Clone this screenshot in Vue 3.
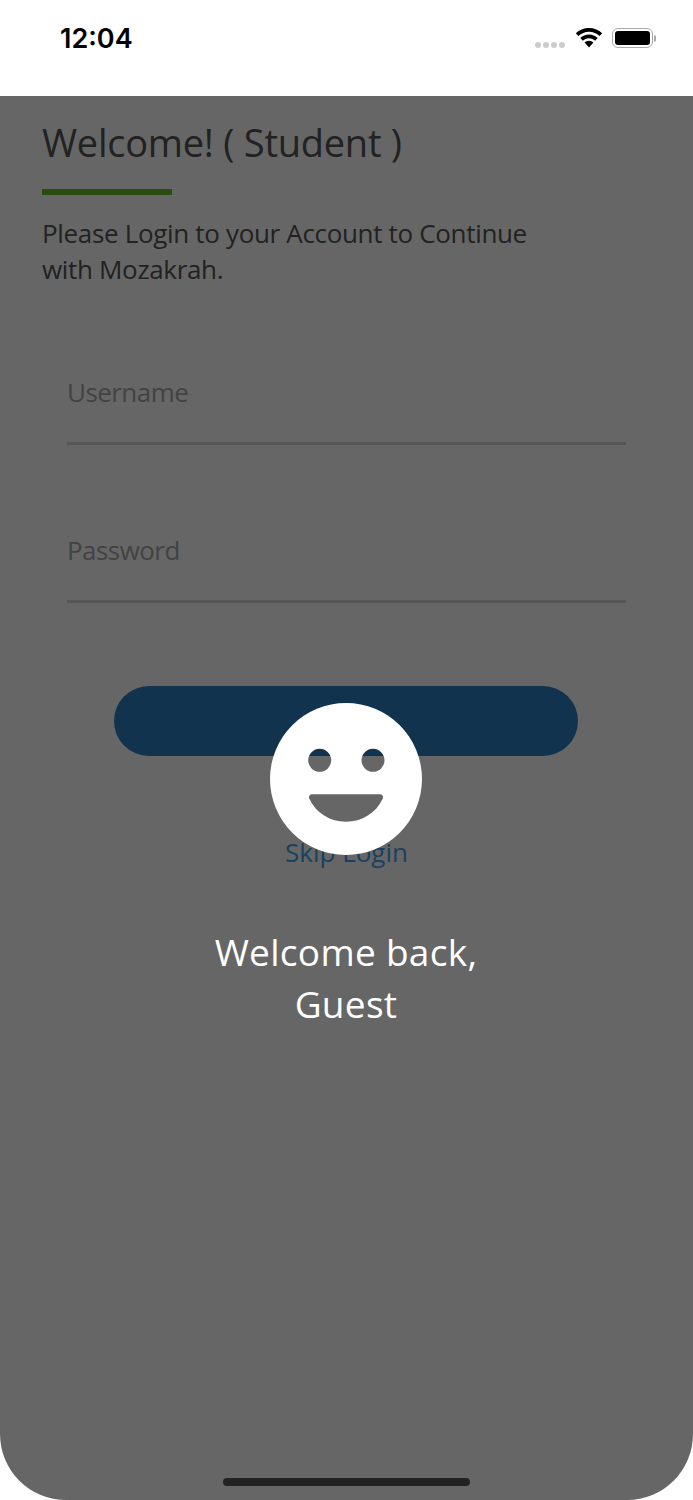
<template>
  <div class="phone">
    <header class="status-bar">
      <span class="time">12:04</span>
      <div class="status-icons">
        <div class="signal">
          <i v-for="n in 4" :key="n"></i>
        </div>
        <svg class="wifi" width="28" height="20" viewBox="0 0 28 20">
          <path d="M14 0C8.800 0 4.300 2 .8 5.300l2.600 2.800C6.200 5.400 9.900 3.800 14 3.800s7.800 1.600 10.600 4.300l2.600-2.800C23.700 2 19.200 0 14 0z" />
          <path d="M14 6.400c-3.400 0-6.400 1.300-8.700 3.500l2.600 2.800c1.600-1.500 3.700-2.500 6.100-2.500s4.500 1 6.100 2.500l2.600-2.800c-2.300-2.200-5.300-3.500-8.700-3.500z" />
          <path d="M14 12.800c-1.700 0-3.200.7-4.400 1.800L14 19.400l4.400-4.800c-1.200-1.100-2.700-1.800-4.400-1.800z" />
        </svg>
        <div class="battery">
          <div class="battery-level"></div>
        </div>
        <div class="battery-nub"></div>
      </div>
    </header>

    <main class="screen">
      <section class="login">
        <h1 class="title">Welcome! ( Student )</h1>
        <div class="title-bar"></div>
        <p class="intro">Please Login to your Account to Continue<br />with Mozakrah.</p>

        <div class="field">Username</div>
        <div class="field">Password</div>

        <button class="login-btn"></button>
        <a class="skip">Skip Login</a>
      </section>

      <div class="overlay">
        <svg class="smiley" width="152" height="152" viewBox="0 0 152 152">
          <path
            fill="#fff"
            fill-rule="evenodd"
            d="M76 0a76 76 0 1 0 0 152a76 76 0 1 0 0-152z
               M49.700 45.800a11.500 11.500 0 1 0 0 23a11.500 11.500 0 1 0 0-23z
               M103 45.800a11.500 11.500 0 1 0 0 23a11.500 11.500 0 1 0 0-23z
               M42 91.300H110a3 3 0 0 1 2.700 4.400C106 110 92 118.700 76 118.700S46 110 39.300 95.700A3 3 0 0 1 42 91.300z"
          />
        </svg>
        <p class="message">Welcome back,<br />Guest</p>
      </div>

      <div class="home-indicator"></div>
    </main>
  </div>
</template>

<script setup>
</script>

<style>
html, body {
  margin: 0;
  background: #fff;
}
</style>

<style scoped>
.phone {
  width: 693px;
  height: 1500px;
  display: flex;
  flex-direction: column;
  background: #fff;
  overflow: hidden;
  font-family: "Open Sans", "Noto Sans", sans-serif;
}

.status-bar {
  height: 96px;
  flex: none;
  box-sizing: border-box;
  padding: 23px 37px 0 60px;
  display: flex;
  justify-content: space-between;
  align-items: flex-start;
}

.time {
  font-family: Inter, sans-serif;
  font-size: 27px;
  font-weight: 600;
  line-height: 32px;
  color: #000;
}

.status-icons {
  display: flex;
  align-items: flex-start;
  padding-top: 5px;
}

.signal {
  display: flex;
  gap: 2px;
  margin: 14px 10px 0 0;
}

.signal i {
  width: 6px;
  height: 6px;
  border-radius: 50%;
  background: #ccc;
}

.wifi {
  fill: #000;
  margin-right: 9px;
}

.battery {
  width: 41px;
  height: 20px;
  box-sizing: border-box;
  padding: 2px;
  border: 1.5px solid #aaa;
  border-radius: 6px;
}

.battery-level {
  height: 100%;
  background: #000;
  border-radius: 3px;
}

.battery-nub {
  width: 2px;
  height: 7px;
  margin: 7px 0 0 1px;
  background: #aaa;
  border-radius: 0 2px 2px 0;
}

.screen {
  position: relative;
  flex: 1;
  overflow: hidden;
  border-radius: 0 0 66px 66px;
  background: #fff;
}

.login {
  padding: 21px 67px 0 42px;
}

.title {
  margin: 0;
  font-size: 38px;
  font-weight: 400;
  line-height: 50px;
  letter-spacing: -0.25px;
  color: #555;
}

.title-bar {
  width: 130px;
  height: 6px;
  margin-top: 22px;
  background: #69be2a;
}

.intro {
  margin: 20px 0 0;
  font-size: 26px;
  line-height: 36px;
  letter-spacing: -0.33px;
  color: #555;
}

.field {
  margin-left: 25px;
  height: 70px;
  margin-top: 85px;
  border-bottom: 3px solid #d8d8d8;
  font-size: 26px;
  line-height: 40px;
  letter-spacing: -0.55px;
  color: #a8a8a8;
}

.login-btn {
  display: block;
  width: 464px;
  height: 70px;
  margin: 83px 0 0 72px;
  border: 0;
  border-radius: 35px;
  background: #2f7fc3;
}

.skip {
  display: block;
  margin-top: 76px;
  padding-left: 25px;
  text-align: center;
  font-size: 26px;
  line-height: 40px;
  color: #47a0f0;
}

.overlay {
  position: absolute;
  inset: 0;
  display: flex;
  flex-direction: column;
  align-items: center;
  padding: 607px 1px 0 0;
  box-sizing: border-box;
  background: rgba(0, 0, 0, 0.6);
}

.smiley {
  display: block;
}

.message {
  margin: 71px 0 0;
  text-align: center;
  font-size: 37px;
  line-height: 52px;
  letter-spacing: 0.3px;
  color: #fff;
}

.home-indicator {
  position: absolute;
  left: 223px;
  bottom: 14px;
  width: 247px;
  height: 8px;
  border-radius: 4px;
  background: #222;
}
</style>
